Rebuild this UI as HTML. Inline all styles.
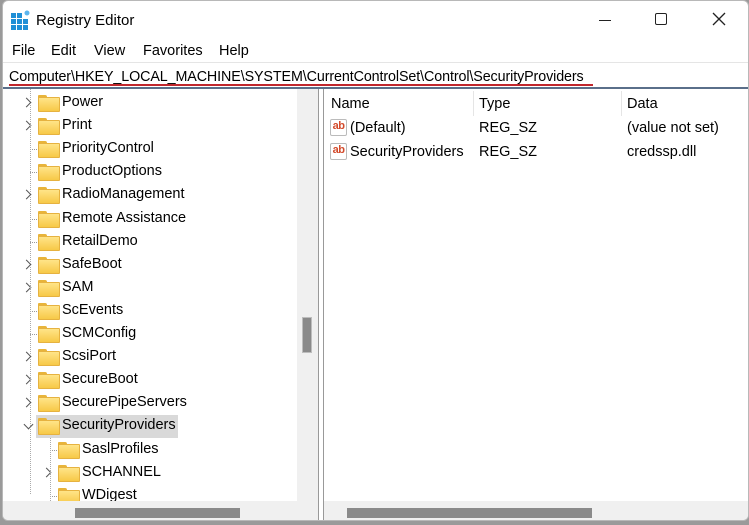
<!DOCTYPE html>
<html><head><style>
*{margin:0;padding:0;box-sizing:border-box}
body{width:749px;height:525px;background:#9a9a9a;position:relative;overflow:hidden;font-family:"Liberation Sans",sans-serif;color:#000}
#win{position:absolute;left:2px;top:0;width:747px;height:521px;background:#fff;border:1px solid #b8b8b8;border-radius:6px;overflow:hidden}
.a{position:absolute;white-space:nowrap}
.t{font-size:14.5px}
.f{position:absolute;width:20px;height:15px}
.f:before{content:"";position:absolute;left:0;top:0;width:9px;height:4px;background:#e8b43a;border-radius:1px 2px 0 0}
.f:after{content:"";position:absolute;left:0;top:2px;width:20px;height:13px;background:linear-gradient(#ffe489,#f7c948);border:1px solid #e6b240;border-radius:1px}
.ch{position:absolute;width:7px;height:7px;border-right:1.3px solid #555;border-top:1.3px solid #555;transform:rotate(45deg)}
.dn{transform:rotate(135deg)}
.dl{position:absolute;border-top:1px dotted #999;width:9px}
.ab{position:absolute;width:17px;height:17px;border:1px solid #bbb;border-radius:2px;background:#fff;font-size:11px;font-weight:bold;color:#d34a2b;line-height:12px;text-align:center;letter-spacing:-0.5px}
</style></head><body>
<div id="win">
<svg class="a" style="left:8px;top:9px" width="20" height="20"><g fill="#1f8fd6"><rect x="0" y="3" width="5" height="5"/><rect x="6" y="3" width="5" height="5"/><rect x="0" y="9" width="5" height="5"/><rect x="6" y="9" width="5" height="5"/><rect x="12" y="9" width="5" height="5"/><rect x="0" y="15" width="5" height="5"/><rect x="6" y="15" width="5" height="5"/><rect x="12" y="15" width="5" height="5"/></g><circle cx="16" cy="3" r="2.5" fill="#5bb5ee"/></svg>
<div class="a t" style="left:33px;top:11px;font-size:15px">Registry Editor</div>
<div class="a" style="left:596px;top:19px;width:12px;height:1px;background:#222"></div>
<div class="a" style="left:652px;top:12px;width:12px;height:12px;border:1.2px solid #222;border-radius:2px"></div>
<svg class="a" style="left:709px;top:11px" width="14" height="14"><path d="M1 1L13 13M13 1L1 13" stroke="#222" stroke-width="1.3"/></svg>
<div class="a t" style="left:9px;top:42px">File</div>
<div class="a t" style="left:48px;top:42px">Edit</div>
<div class="a t" style="left:91px;top:42px">View</div>
<div class="a t" style="left:140px;top:42px">Favorites</div>
<div class="a t" style="left:216px;top:42px">Help</div>
<div class="a" style="left:0;top:61px;width:747px;height:1px;background:#e5e5e5"></div>
<div class="a t" style="left:6px;top:68px;font-size:14.3px;letter-spacing:-0.1px">Computer\HKEY_LOCAL_MACHINE\SYSTEM\CurrentControlSet\Control\SecurityProviders</div>
<div class="a" style="left:6px;top:83px;width:584px;height:2px;background:#c0272d"></div>
<div class="a" style="left:0;top:86px;width:747px;height:1.5px;background:#5a6f8a"></div>
<div id="tp" class="a" style="left:0;top:88px;width:294px;height:412px;overflow:hidden">
<div class="a" style="left:33px;top:326px;width:142px;height:23px;background:#d9d9d9"></div>
</div>
<div class="a" style="left:294px;top:88px;width:21px;height:413px;background:#f0f0f0"></div>
<div class="a" style="left:299px;top:316px;width:10px;height:36px;background:#8a8a8a;border:1px solid #bdbdbd"></div>
<div class="a" style="left:315px;top:88px;width:1px;height:433px;background:#999"></div>
<div class="a" style="left:320px;top:88px;width:1px;height:433px;background:#999"></div>
<div class="a" style="left:0;top:500px;width:315px;height:21px;background:#f0f0f0"></div>
<div class="a" style="left:72px;top:507px;width:165px;height:10px;background:#8a8a8a"></div>
<div class="a" style="left:321px;top:500px;width:426px;height:21px;background:#f0f0f0"></div>
<div class="a" style="left:344px;top:507px;width:245px;height:10px;background:#8a8a8a"></div>
<div class="a" style="left:470px;top:90px;width:1px;height:25px;background:#e5e5e5"></div>
<div class="a" style="left:618px;top:90px;width:1px;height:25px;background:#e5e5e5"></div>
<div class="a t" style="left:328px;top:95px">Name</div>
<div class="a t" style="left:476px;top:95px">Type</div>
<div class="a t" style="left:624px;top:95px">Data</div>
<div class="ab" style="left:327px;top:118px">ab</div>
<div class="a t" style="left:347px;top:119px">(Default)</div>
<div class="a t" style="left:476px;top:119px">REG_SZ</div>
<div class="a t" style="left:624px;top:119px">(value not set)</div>
<div class="ab" style="left:327px;top:142px">ab</div>
<div class="a t" style="left:347px;top:143px">SecurityProviders</div>
<div class="a t" style="left:476px;top:143px">REG_SZ</div>
<div class="a t" style="left:624px;top:143px">credssp.dll</div>
</div>
<script>
var rows=[["Power",1,0],["Print",1,0],["PriorityControl",0,0],["ProductOptions",0,0],["RadioManagement",1,0],["Remote Assistance",0,0],["RetailDemo",0,0],["SafeBoot",1,0],["SAM",1,0],["ScEvents",0,0],["SCMConfig",0,0],["ScsiPort",1,0],["SecureBoot",1,0],["SecurePipeServers",1,0],["SecurityProviders",2,0],["SaslProfiles",0,1],["SCHANNEL",1,1],["WDigest",0,1]];
var h="";
rows.forEach(function(r,i){
 var c=Math.round(102+i*23.1-88), ind=r[2]*20;
 if(r[1]==1) h+='<div class="ch" style="left:'+(20+ind)+'px;top:'+(c-4)+'px"></div>';
 else if(r[1]==2) h+='<div class="ch dn" style="left:22px;top:'+(c-5)+'px"></div>';
 else h+='<div class="dl" style="left:'+(27+ind)+'px;top:'+(c)+'px"></div>';
 h+='<div class="f" style="left:'+(35+ind)+'px;top:'+(c-8)+'px"></div>';
 h+='<div class="a t" style="left:'+(59+ind)+'px;top:'+(c-9)+'px">'+r[0]+'</div>';
});
h+='<div class="a" style="left:27px;top:0;height:405px;border-left:1px dotted #aaa"></div>';
h+='<div class="a" style="left:47px;top:349px;height:65px;border-left:1px dotted #aaa"></div>';
document.getElementById('tp').innerHTML+=h;
</script>
</body></html>
